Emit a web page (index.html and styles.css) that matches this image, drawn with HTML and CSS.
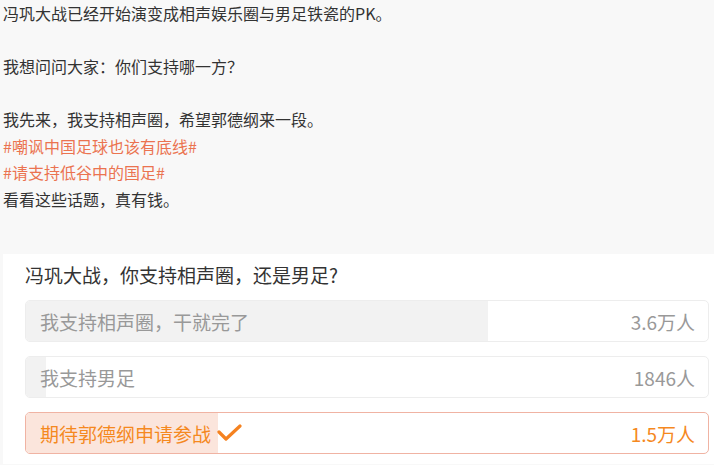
FILE: index.html
```html
<!DOCTYPE html>
<html lang="zh-CN">
<head>
<meta charset="utf-8">
<link rel="stylesheet" href="styles.css">
</head>
<body>
<div class="post">
  <p>冯巩大战已经开始演变成相声娱乐圈与男足铁瓷的PK。</p>
  <p class="blank">&nbsp;</p>
  <p>我想问问大家：你们支持哪一方？</p>
  <p class="blank">&nbsp;</p>
  <p>我先来，我支持相声圈，希望郭德纲来一段。</p>
  <p class="tag">#嘲讽中国足球也该有底线#</p>
  <p class="tag">#请支持低谷中的国足#</p>
  <p>看看这些话题，真有钱。</p>
</div>
<div class="card">
  <div class="title">冯巩大战，你支持相声圈，还是男足?</div>
  <div class="options">
    <div class="option">
      <div class="fill" style="width:67.8%"></div>
      <span class="label">我支持相声圈，干就完了</span>
      <span class="count">3.6万人</span>
    </div>
    <div class="option">
      <div class="fill" style="width:2.9%"></div>
      <span class="label">我支持男足</span>
      <span class="count">1846人</span>
    </div>
    <div class="option selected">
      <div class="fill" style="width:28.1%"></div>
      <span class="label">期待郭德纲申请参战<svg class="check" width="26" height="20" viewBox="0 0 26 20"><polyline points="2,9 9,16 23,3" fill="none" stroke="#f58220" stroke-width="3.2" stroke-linecap="round" stroke-linejoin="round"/></svg></span>
      <span class="count">1.5万人</span>
    </div>
  </div>
</div>
</body>
</html>
```

FILE: styles.css
```css
html, body {
  margin: 0;
  padding: 0;
  background: #f8f8f8;
}
body {
  width: 714px;
  height: 465px;
  overflow: hidden;
  font-family: "Noto Sans CJK SC", "Noto Sans", sans-serif;
  color: #333;
}
.post {
  padding: 0 0 0 3px;
  font-size: 16px;
  line-height: 26.5px;
}
.post p {
  margin: 0;
}
.post .tag {
  color: #eb7350;
}
.card {
  margin: 42px 0 0 3px;
  background: #fff;
  padding: 8px 5px 10px 22px;
  display: flex;
  flex-direction: column;
  gap: 12px;
}
.title {
  font-size: 19px;
  line-height: 26px;
  color: #333;
}
.options {
  display: flex;
  flex-direction: column;
  gap: 14px;
}
.option {
  position: relative;
  height: 42px;
  box-sizing: border-box;
  border: 1px solid #ededed;
  border-radius: 5px;
  background: #fff;
  display: flex;
  align-items: center;
  justify-content: space-between;
  padding: 0 13px 0 14px;
  overflow: hidden;
  font-size: 19px;
  color: #999;
}
.option .fill {
  position: absolute;
  left: 0;
  top: 0;
  bottom: 0;
  background: #f2f2f2;
}
.option .label, .option .count {
  position: relative;
  display: flex;
  align-items: center;
}
.option.selected {
  border-color: #f0b3a3;
  color: #f5891f;
}
.option.selected .fill {
  background: #fbe5dc;
}
.check {
  margin-left: 6px;
}
```
